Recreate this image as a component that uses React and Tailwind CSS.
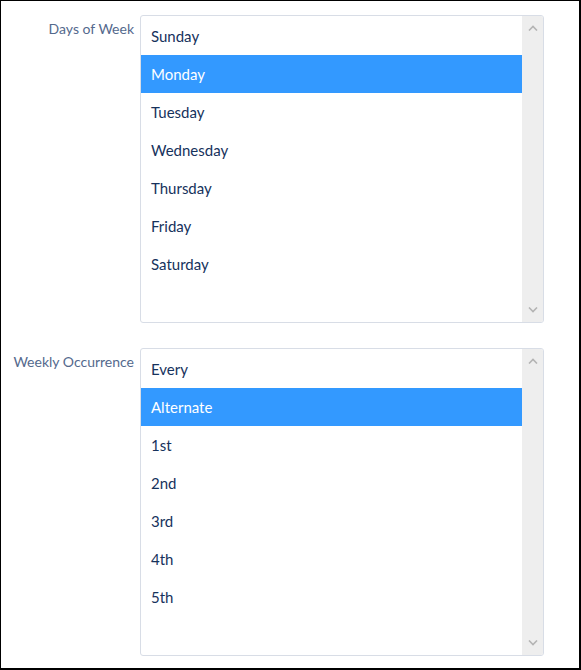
const days = ["Sunday", "Monday", "Tuesday", "Wednesday", "Thursday", "Friday", "Saturday"];
const occurrences = ["Every", "Alternate", "1st", "2nd", "3rd", "4th", "5th"];

const Chevron = ({ up }) => (
  <svg width="10" height="6" viewBox="0 0 10 6" className="text-[#b4b4b4]">
    <path
      d={up ? "M1 5.5 L5 1.5 L9 5.5" : "M1 0.5 L5 4.5 L9 0.5"}
      fill="none"
      stroke="currentColor"
      strokeWidth="1.6"
    />
  </svg>
);

const ListBox = ({ options, selected }) => (
  <div className="flex h-[308px] w-[404px] overflow-hidden rounded-[3px] border border-[#d8dde6] bg-white">
    <ul className="flex-1 pt-px">
      {options.map((option) => (
        <li
          key={option}
          className={
            option === selected
              ? "flex h-[38px] items-center bg-[#3399ff] pl-[10px] text-[15px] text-white"
              : "flex h-[38px] items-center pl-[10px] text-[15px] text-[#16325c]"
          }
        >
          {option}
        </li>
      ))}
    </ul>
    <div className="flex w-[21px] flex-col items-center justify-between bg-[#eeeeee] py-[9px]">
      <Chevron up />
      <Chevron />
    </div>
  </div>
);

export default function App() {
  return (
    <div
      className="h-[670px] w-[581px] border-t border-l border-r-2 border-b-2 border-black bg-white"
      style={{ fontFamily: "Lato, 'Open Sans', sans-serif" }}
    >
      <div className="flex flex-col gap-[25px] pt-[14px]">
        <div className="flex gap-[6px]">
          <label className="w-[133px] pt-[3px] text-right text-[14px] text-[#54698d]">Days of Week</label>
          <ListBox options={days} selected="Monday" />
        </div>
        <div className="flex gap-[6px]">
          <label className="w-[133px] pt-[3px] text-right text-[14px] text-[#54698d]">Weekly Occurrence</label>
          <ListBox options={occurrences} selected="Alternate" />
        </div>
      </div>
    </div>
  );
}
